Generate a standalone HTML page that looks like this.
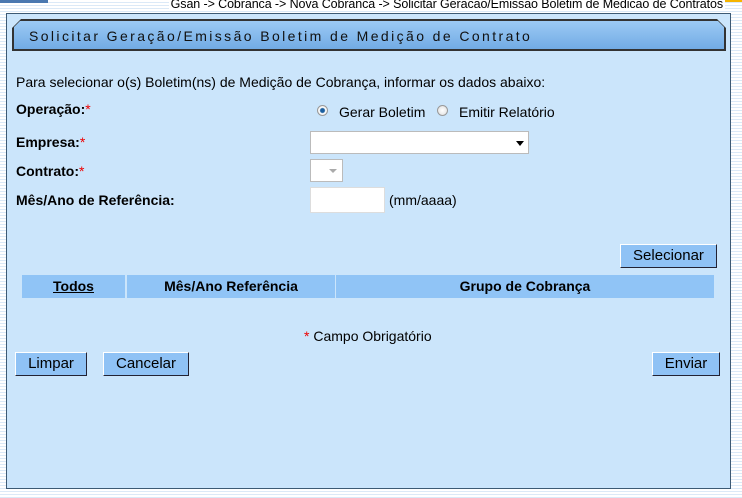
<!DOCTYPE html>
<html><head><meta charset="utf-8"><style>
*{margin:0;padding:0;box-sizing:border-box}
body{width:742px;height:498px;overflow:hidden;font-family:"Liberation Sans",sans-serif;font-size:14px;color:#000;
background:repeating-linear-gradient(to bottom,#fff 0,#fff 2px,#dbe9f7 2px,#dbe9f7 3px);position:relative}
.a{position:absolute;white-space:nowrap}
#bc{right:17px;top:-3px;font-size:12.5px;letter-spacing:-0.1px;white-space:nowrap;background:#fff;padding:0 2px}
#panel{left:6px;top:13px;width:725px;height:476px;background:#cbe5fb;border:1px solid #3d5a74}
#title{left:13px;top:20px;width:712px;height:30px;border:1px solid #333;background:linear-gradient(#9ccaf5,#72abe4);
clip-path:polygon(8px 0,calc(100% - 8px) 0,100% 8px,100% 100%,0 100%,0 8px);font-size:14px;letter-spacing:2.4px;padding:7px 0 0 15px;color:#111}
#tb{left:12px;top:19px;width:714px;height:32px;background:#333;clip-path:polygon(9px 0,calc(100% - 9px) 0,100% 9px,100% 100%,0 100%,0 9px)}
b{font-weight:bold}
.r{color:#e00}
.rad{width:11px;height:11px;border-radius:50%;border:1px solid #999;background:radial-gradient(#fff,#ddd)}
.inp{background:#fff;border:1px solid #bbb}
.btn{background:#8fc2f5;border:1px solid #fff;border-right-color:#223;border-bottom-color:#223;font-size:15px;text-align:center;line-height:22px}
.th{background:#90c4f6;top:275px;height:23px;font-weight:bold;text-align:center;line-height:23px;font-size:14px}
</style></head><body>
<div class="a" style="left:0;top:0;width:48px;height:3px;background:#4a78b0"></div>
<div class="a" style="left:600px;top:0;width:142px;height:2px;background:#f5b400"></div>
<div class="a" id="bc">Gsan -&gt; Cobranca -&gt; Nova Cobranca -&gt; Solicitar Geracao/Emissao Boletim de Medicao de Contratos</div>
<div class="a" id="panel"></div>
<div class="a" id="tb"></div>
<div class="a" id="title">Solicitar Geração/Emissão Boletim de Medição de Contrato</div>
<div class="a" style="left:16px;top:74px">Para selecionar o(s) Boletim(ns) de Medição de Cobrança, informar os dados abaixo:</div>
<div class="a" style="left:16px;top:101px"><b>Operação:</b><span class="r">*</span></div>
<div class="a rad" style="left:317px;top:105px;background:radial-gradient(#1b5fa0 0,#1b5fa0 2px,#fff 3px,#ddd)"></div>
<div class="a" style="left:339px;top:104px">Gerar Boletim</div>
<div class="a rad" style="left:437px;top:105px"></div>
<div class="a" style="left:459px;top:104px">Emitir Relatório</div>
<div class="a" style="left:16px;top:134px"><b>Empresa:</b><span class="r">*</span></div>
<div class="a inp" style="left:310px;top:131px;width:219px;height:23px"></div>
<div class="a" style="left:516px;top:141px;border:4px solid transparent;border-top:5px solid #000;border-bottom:0"></div>
<div class="a" style="left:16px;top:163px"><b>Contrato:</b><span class="r">*</span></div>
<div class="a inp" style="left:310px;top:159px;width:33px;height:23px"></div>
<div class="a" style="left:329px;top:169px;border:4px solid transparent;border-top:4px solid #aaa;border-bottom:0"></div>
<div class="a" style="left:16px;top:192px"><b>Mês/Ano de Referência:</b></div>
<div class="a inp" style="left:310px;top:187px;width:75px;height:26px;border-color:#ddd"></div>
<div class="a" style="left:389px;top:192px">(mm/aaaa)</div>
<div class="a btn" style="left:620px;top:244px;width:97px;height:24px">Selecionar</div>
<div class="a th" style="left:22px;width:103px"><u>Todos</u></div>
<div class="a th" style="left:127px;width:208px">Mês/Ano Referência</div>
<div class="a th" style="left:336px;width:378px">Grupo de Cobrança</div>
<div class="a" style="left:304px;top:328px"><span class="r">*</span> Campo Obrigatório</div>
<div class="a btn" style="left:15px;top:352px;width:72px;height:24px">Limpar</div>
<div class="a btn" style="left:103px;top:352px;width:86px;height:24px">Cancelar</div>
<div class="a btn" style="left:652px;top:352px;width:68px;height:24px">Enviar</div>
</body></html>
